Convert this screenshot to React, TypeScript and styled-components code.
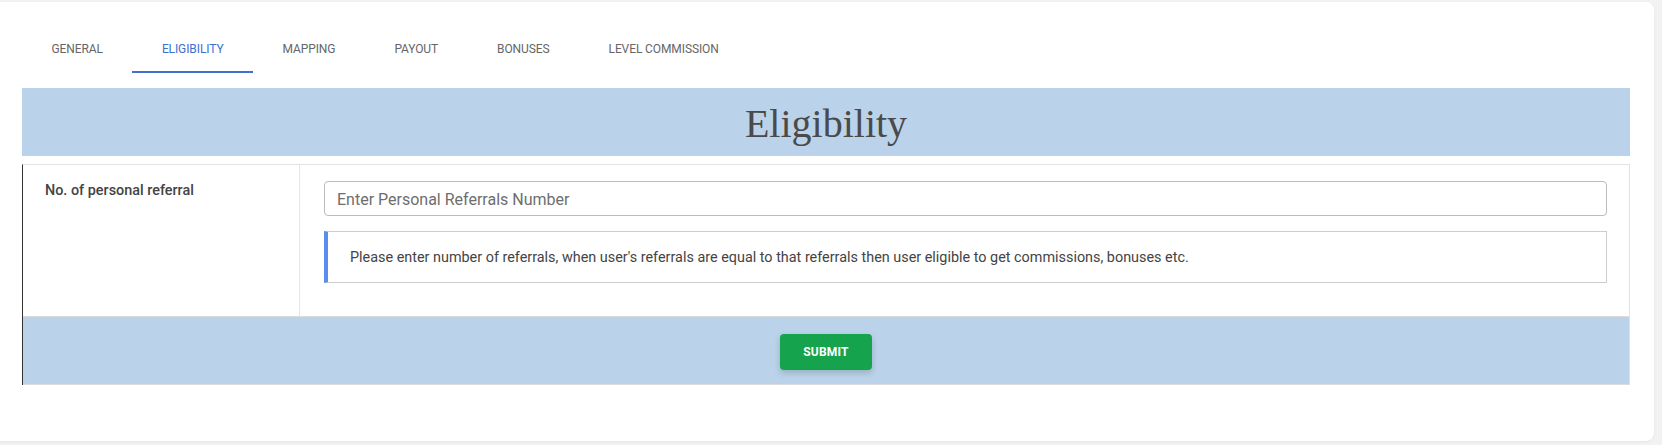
import React from "react";
import styled, { createGlobalStyle } from "styled-components";

const Global = createGlobalStyle`
  html, body { margin: 0; padding: 0; background: #f2f2f2; }
  body { font-family: Roboto, "Liberation Sans", Arial, sans-serif; }
  * { box-sizing: border-box; }
`;

const Page = styled.div`
  padding: 2px 8px 4px 0;
`;

const Card = styled.div`
  background: #fff;
  border-radius: 0 8px 8px 0;
  box-shadow: 0 1px 3px rgba(0, 0, 0, 0.06);
  padding: 23px 24px 56px 22px;
  height: 439px;
`;

const Tabs = styled.nav`
  display: flex;
  height: 48px;
  margin-bottom: 15px;
`;

const Tab = styled.div<{ $active?: boolean }>`
  display: flex;
  align-items: center;
  justify-content: center;
  padding: 1px 29.5px 0;
  height: 48px;
  font-size: 12px;
  font-weight: 400;
  letter-spacing: -0.1px;
  text-transform: uppercase;
  color: ${(p) => (p.$active ? "#3e6fd1" : "#666")};
  border-bottom: 2px solid ${(p) => (p.$active ? "#3e6fd1" : "transparent")};
`;

const Banner = styled.h1`
  margin: 0 0 8px 0;
  height: 68px;
  background: #bad3ea;
  display: flex;
  align-items: center;
  justify-content: center;
  font-family: "Liberation Serif", "Times New Roman", serif;
  font-weight: 400;
  font-size: 40px;
  color: #4a4a4a;
  padding-top: 2px;
`;

const Table = styled.div`
  border-top: 1px solid #e2e2e2;
  border-right: 1px solid #e2e2e2;
  border-left: 1px solid #333;
`;

const Row = styled.div`
  display: grid;
  grid-template-columns: 277px 1fr;
  height: 151px;
`;

const LabelCell = styled.div`
  border-right: 1px solid #e6e6e6;
  padding: 17px 22px 0 22px;
  font-size: 14.4px;
  font-weight: 500;
  color: #444;
`;

const FieldCell = styled.div`
  padding: 16px 22px 0 24px;
  display: flex;
  flex-direction: column;
  gap: 15px;
`;

const Input = styled.input`
  height: 35px;
  width: 100%;
  border: 1px solid #bcbcbc;
  border-radius: 4px;
  padding: 2px 12px 0;
  font-family: Roboto, "Liberation Sans", Arial, sans-serif;
  font-size: 16px;
  color: #333;
  outline: none;
  &::placeholder { color: #6e6e6e; }
`;

const Note = styled.div`
  height: 52px;
  border: 1px solid #cdcdcd;
  border-left: 4px solid #5b8def;
  display: flex;
  align-items: center;
  padding: 1px 0 0 22px;
  font-size: 14.4px;
  color: #444;
`;

const Footer = styled.div`
  height: 69px;
  background: #bad3ea;
  border-top: 1px solid #dcdcdc;
  border-bottom: 1px solid #dcdcdc;
  display: flex;
  justify-content: center;
  align-items: flex-start;
  padding-top: 17px;
`;

const Submit = styled.button`
  width: 92px;
  height: 36px;
  background: #16a34e;
  color: #fff;
  border: none;
  border-radius: 4px;
  font-family: Roboto, "Liberation Sans", Arial, sans-serif;
  font-size: 12px;
  font-weight: 700;
  letter-spacing: 0.2px;
  box-shadow: 0 3px 6px rgba(0, 0, 0, 0.18);
`;

const tabs = ["General", "Eligibility", "Mapping", "Payout", "Bonuses", "Level Commission"];

export default function App() {
  return (
    <>
      <Global />
      <Page>
        <Card>
          <Tabs>
            {tabs.map((t) => (
              <Tab key={t} $active={t === "Eligibility"}>
                {t}
              </Tab>
            ))}
          </Tabs>
          <Banner>Eligibility</Banner>
          <Table>
            <Row>
              <LabelCell>No. of personal referral</LabelCell>
              <FieldCell>
                <Input placeholder="Enter Personal Referrals Number" />
                <Note>
                  Please enter number of referrals, when user's referrals are equal to that referrals then user
                  eligible to get commissions, bonuses etc.
                </Note>
              </FieldCell>
            </Row>
            <Footer>
              <Submit>SUBMIT</Submit>
            </Footer>
          </Table>
        </Card>
      </Page>
    </>
  );
}
